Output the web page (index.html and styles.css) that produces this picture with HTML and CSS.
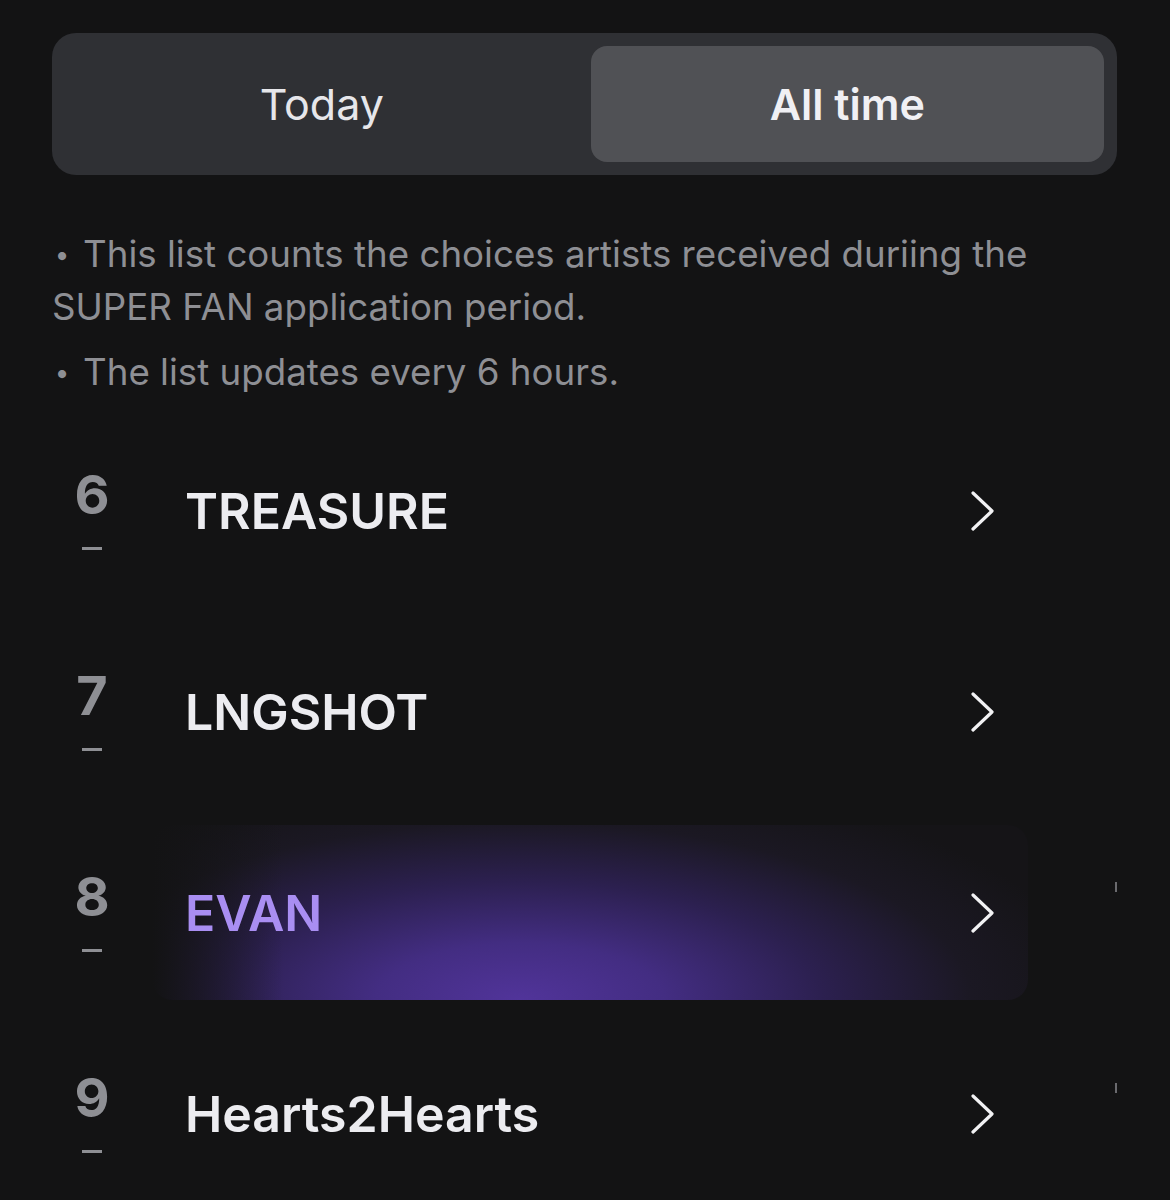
FILE: index.html
```html
<!DOCTYPE html>
<html>

<head>
    <meta charset="utf-8">
    <title>Super Fan Ranking</title>
    <link rel="stylesheet" href="styles.css">
</head>

<body>
    <div class="page">
        <div class="tabs">
            <button class="tab">Today</button>
            <button class="tab active">All time</button>
        </div>

        <div class="notes">
            <p>This list counts the choices artists received duriing the SUPER FAN application period.</p>
            <p>The list updates every 6 hours.</p>
        </div>

        <div class="ranking">
            <div class="row">
                <div class="rank">
                    <span class="num">6</span>
                    <span class="dash"></span>
                </div>
                <div class="card">
                    <span class="name">TREASURE</span>
                    <svg class="chevron" viewBox="0 0 24 40"><polyline points="2,2 21,20 2,38" /></svg>
                </div>
            </div>
            <div class="row">
                <div class="rank">
                    <span class="num">7</span>
                    <span class="dash"></span>
                </div>
                <div class="card">
                    <span class="name">LNGSHOT</span>
                    <svg class="chevron" viewBox="0 0 24 40"><polyline points="2,2 21,20 2,38" /></svg>
                </div>
            </div>
            <div class="row">
                <div class="rank">
                    <span class="num">8</span>
                    <span class="dash"></span>
                </div>
                <div class="card mine">
                    <span class="name">EVAN</span>
                    <svg class="chevron" viewBox="0 0 24 40"><polyline points="2,2 21,20 2,38" /></svg>
                </div>
                <span class="tick"></span>
            </div>
            <div class="row">
                <div class="rank">
                    <span class="num">9</span>
                    <span class="dash"></span>
                </div>
                <div class="card">
                    <span class="name">Hearts2Hearts</span>
                    <svg class="chevron" viewBox="0 0 24 40"><polyline points="2,2 21,20 2,38" /></svg>
                </div>
                <span class="tick"></span>
            </div>
        </div>
    </div>
</body>

</html>
```

FILE: styles.css
```css
body {
    margin: 0;
    background-color: #131314;
    font-family: Inter, "Noto Sans", sans-serif;
    color: #ececf0;
}

.page {
    padding: 33px 53px 0 52px;
}

.tabs {
    display: flex;
    gap: 12px;
    padding: 13px;
    border-radius: 24px;
    background-color: #2f3034;
}

.tab {
    flex: 1;
    height: 116px;
    border: none;
    border-radius: 16px;
    background: transparent;
    color: #e6e6ea;
    font-family: inherit;
    font-size: 43px;
    font-weight: 400;
}

.tab.active {
    background-color: #505155;
    color: #f0f0f4;
    font-weight: 600;
}

.notes {
    margin-top: 53px;
    color: #8e8f94;
    font-size: 36.7px;
    line-height: 52px;
}

.notes p {
    margin: 0 0 13px 0;
}

.notes p::before {
    content: "\2022";
    display: inline-block;
    width: 20px;
    margin-right: 11px;
    font-size: 26px;
    text-align: center;
    vertical-align: 3px;
}

.ranking {
    margin-top: 24px;
    display: flex;
    flex-direction: column;
    gap: 26px;
}

.row {
    display: flex;
    align-items: center;
    gap: 20px;
}

.rank {
    width: 80px;
    display: flex;
    flex-direction: column;
    align-items: center;
    padding-bottom: 3px;
}

.num {
    font-size: 54px;
    font-weight: 700;
    line-height: 1;
    color: #8e8f94;
}

.dash {
    width: 20px;
    height: 3px;
    margin-top: 25px;
    background-color: #8e8f94;
}

.card {
    width: 876px;
    height: 175px;
    box-sizing: border-box;
    padding: 0 33px;
    border-radius: 20px;
    display: flex;
    align-items: center;
    justify-content: space-between;
}

.card.mine {
    background:
        linear-gradient(to right, #131314 0%, rgba(19, 19, 20, 0) 15%),
        radial-gradient(ellipse 66% 130% at 42% 100%, #51349a 0%, #432d82 25%, #2c2050 52%, #1b1823 78%, #151417 100%);
}

.name {
    font-size: 50px;
    font-weight: 600;
    color: #ececf0;
}

.mine .name {
    color: #a98ef2;
}

.chevron {
    width: 24px;
    height: 40px;
    fill: none;
    stroke: #f2f2f4;
    stroke-width: 3.2;
    stroke-linecap: round;
    stroke-linejoin: round;
}

.tick {
    align-self: flex-start;
    width: 2px;
    height: 10px;
    margin-top: 57px;
    margin-left: 67px;
    background-color: #6a6a6e;
}
```
